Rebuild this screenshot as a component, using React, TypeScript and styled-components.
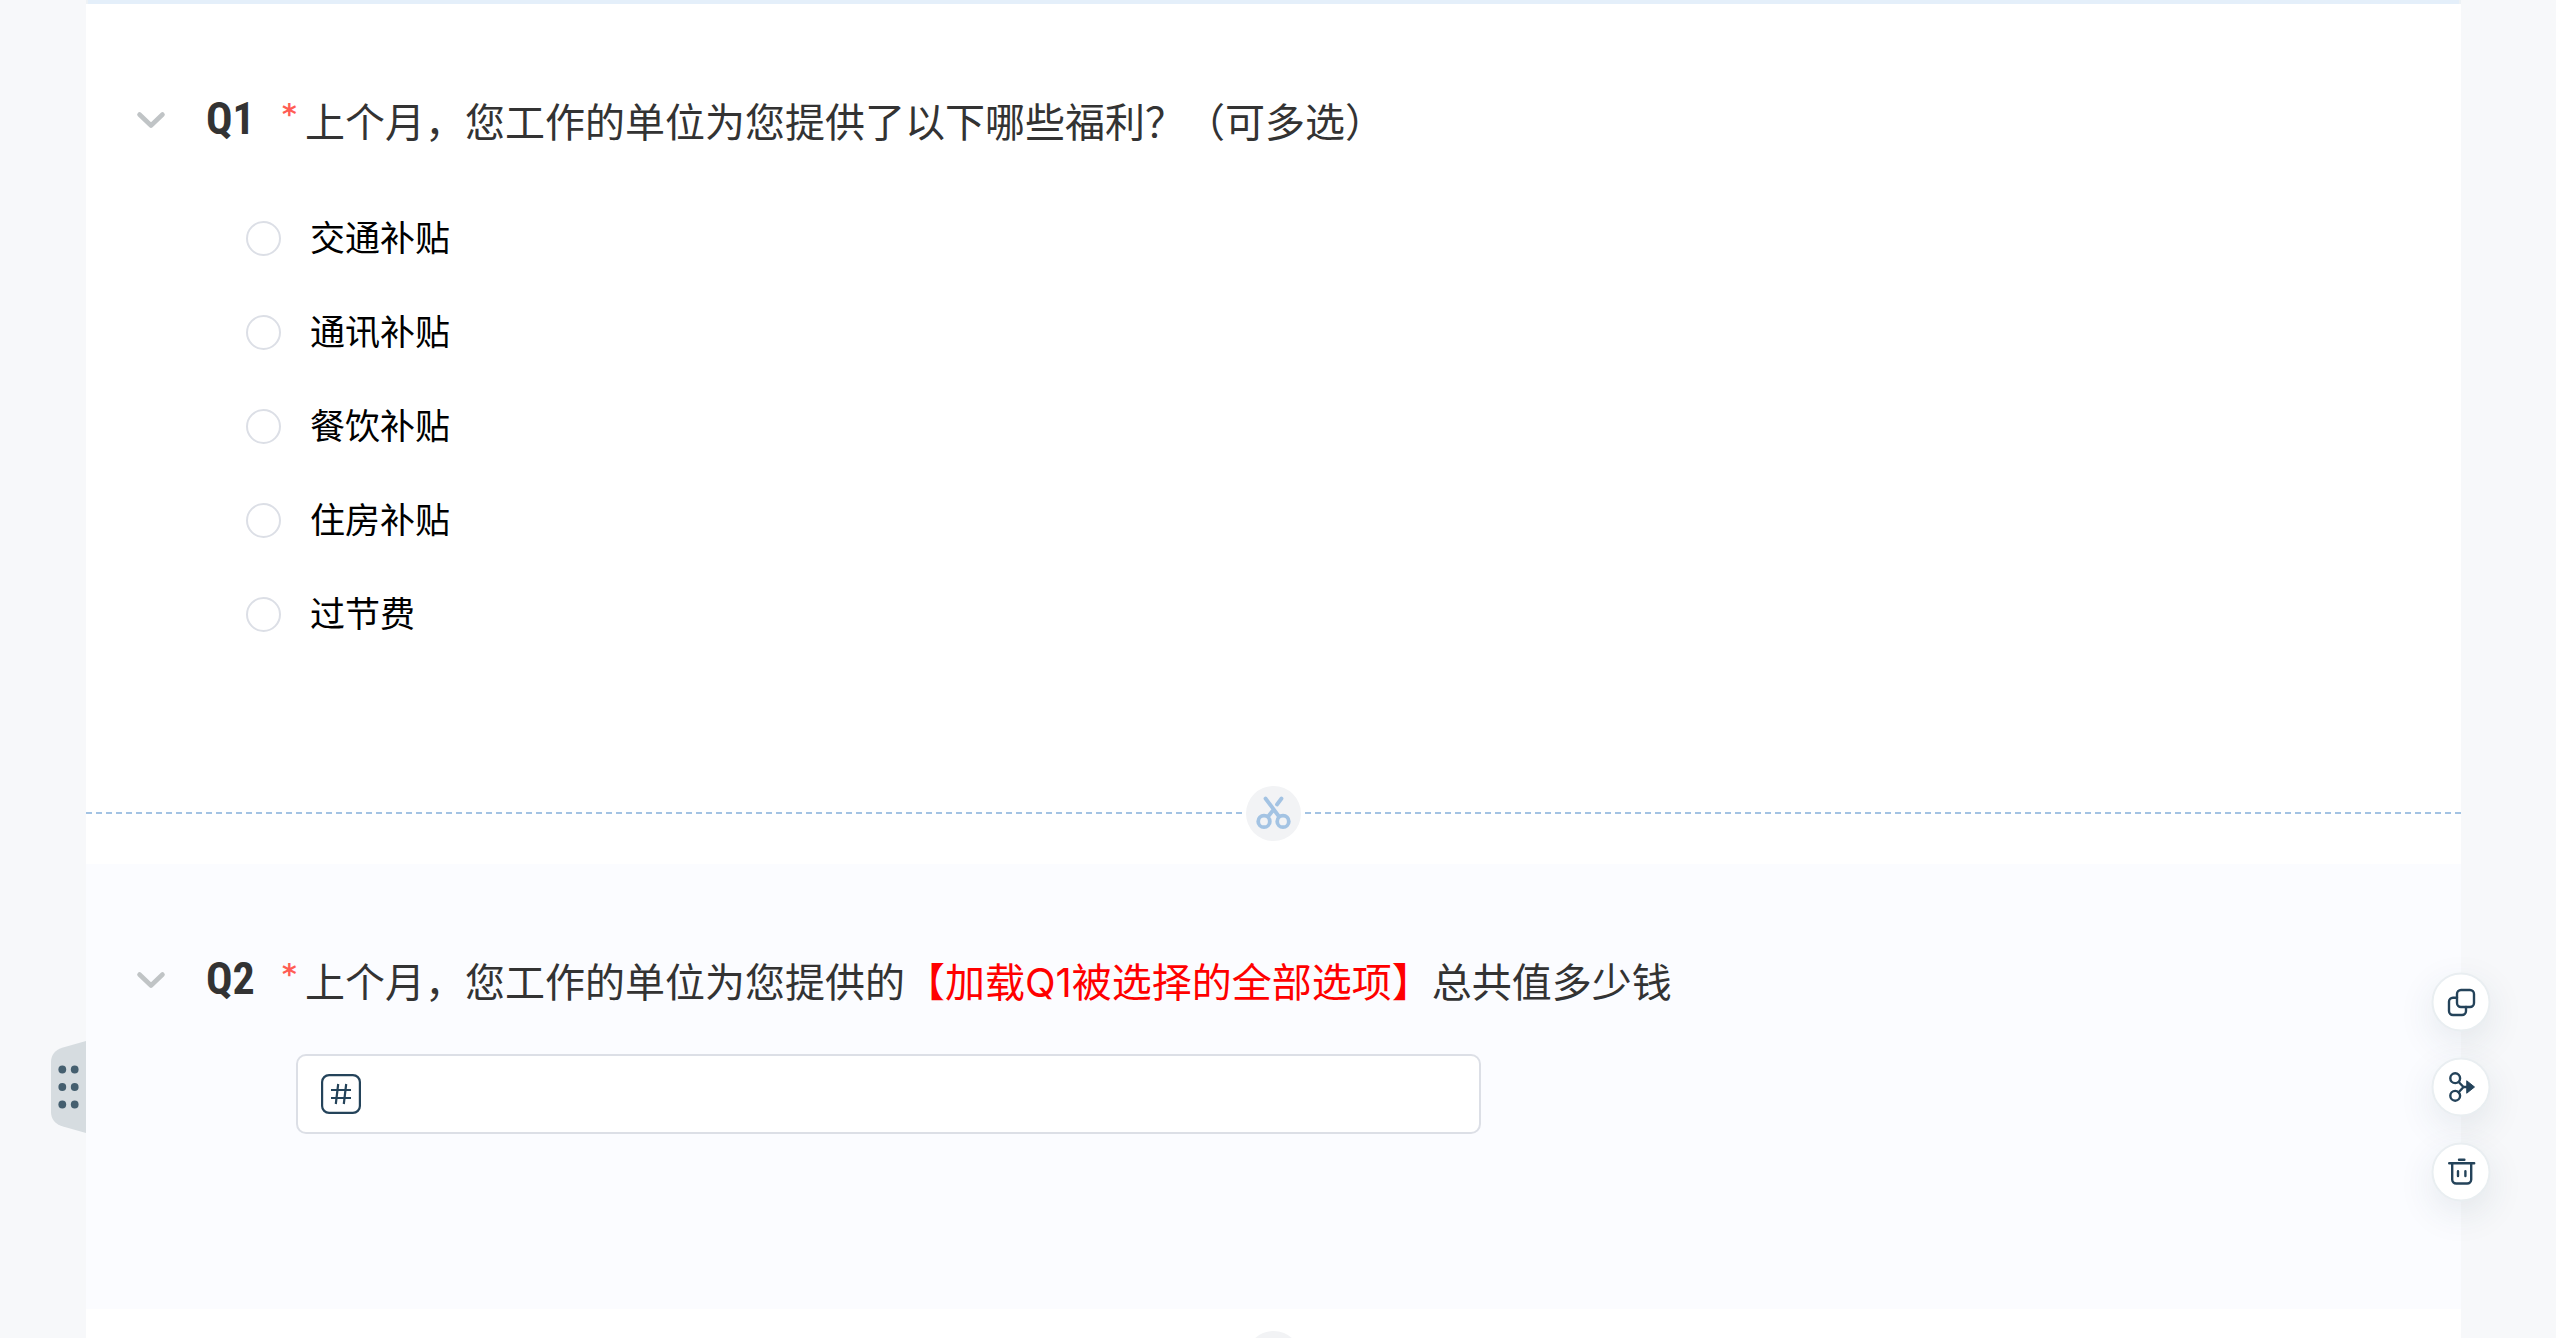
import React from "react";
import styled, { createGlobalStyle } from "styled-components";

const GlobalStyle = createGlobalStyle`
  *, *::before, *::after { box-sizing: border-box; }
  body {
    margin: 0;
    background: #f7f8fa;
    font-family: "Inter", "Noto Sans CJK SC", sans-serif;
  }
`;

const Page = styled.main`
  height: 100vh;
  overflow: hidden;
  padding: 0 95px 0 86px;
`;

const TopRule = styled.div`
  height: 4px;
  background: #e4effa;
  border: solid #eef2f5;
  border-width: 0 2px;
`;

const Block = styled.section<{ $active?: boolean; $bottom: number }>`
  position: relative;
  padding: 91px 50px ${(p) => p.$bottom}px;
  background: ${(p) => (p.$active ? "#fbfcff" : "#ffffff")};
`;

const Header = styled.header`
  display: flex;
  align-items: flex-start;
`;

const Collapse = styled.button`
  width: 30px;
  height: 50px;
  margin-right: 40px;
  padding: 0;
  border: 0;
  background: none;
  display: flex;
  align-items: center;
  cursor: pointer;
`;

const Number = styled.span`
  width: 76px;
  font: 700 44px/48px "Roboto Condensed", "Liberation Sans Narrow", "Roboto", sans-serif;
  color: #333333;
`;

const Star = styled.span`
  width: 23px;
  font: 700 28px/40px "DejaVu Sans", sans-serif;
  color: #ff5c54;
`;

const Title = styled.h2`
  margin: 0;
  font-size: 40px;
  line-height: 56px;
  font-weight: 400;
  color: #333333;
`;

const Mark = styled.span`
  color: #ff0000;
`;

const Options = styled.ul`
  list-style: none;
  margin: 40px 0 0;
  padding: 0 0 0 110px;
`;

const Option = styled.li`
  display: flex;
  align-items: center;
  height: 94px;
`;

const OptionLabel = styled.label`
  display: flex;
  align-items: center;
  gap: 29px;
  font-size: 35px;
  line-height: 50px;
  color: #000000;
  cursor: pointer;
`;

const Radio = styled.input`
  appearance: none;
  width: 35px;
  height: 35px;
  margin: 0;
  border: 2px solid #dcdfe6;
  border-radius: 50%;
  background: #ffffff;

  &:checked {
    border: 10px solid #a3c3e3;
  }
`;

const Divider = styled.div`
  display: flex;
  align-items: center;
  gap: 4px;
  height: 100px;
  padding-bottom: 2px;
  background: #ffffff;
`;

const Dashes = styled.span`
  flex: 1;
  height: 2px;
  background: repeating-linear-gradient(90deg, #a3c3e3 0 6px, transparent 6px 10px);
`;

const Cut = styled.button`
  width: 55px;
  height: 55px;
  padding: 0;
  border: 0;
  border-radius: 50%;
  background: #f2f3f5;
  display: block;
  cursor: pointer;
`;

const Field = styled.label`
  display: flex;
  align-items: center;
  gap: 20px;
  width: 1185px;
  max-width: 100%;
  height: 80px;
  margin: 43px 0 0 160px;
  padding: 0 23px;
  border: 2px solid #dcdfe6;
  border-radius: 10px;
  background: #ffffff;
`;

const FieldInput = styled.input`
  flex: 1;
  min-width: 0;
  border: 0;
  outline: 0;
  background: transparent;
  font: inherit;
  font-size: 35px;
`;

const Handle = styled.button`
  position: absolute;
  right: 100%;
  top: 50%;
  transform: translateY(-50%);
  width: 35px;
  height: 92px;
  padding: 0;
  border: 0;
  background: none;
  cursor: grab;

  svg { display: block; }
`;

const Tools = styled.div`
  position: absolute;
  right: 0;
  top: 50%;
  transform: translate(50%, -50%);
  display: flex;
  flex-direction: column;
  gap: 26px;
`;

const Tool = styled.button`
  width: 59px;
  height: 59px;
  padding: 0;
  border: 2px solid #e9eef1;
  border-radius: 50%;
  background: #ffffff;
  box-shadow: 0 12px 36px rgba(36, 67, 90, 0.1);
  display: grid;
  place-items: center;
  cursor: pointer;
`;

const Chevron = () => (
  <svg width="30" height="20" viewBox="0 0 30 20" fill="none" stroke="#c0c4c6" strokeWidth="4.6" strokeLinecap="round" strokeLinejoin="round" aria-hidden="true">
    <path d="M3.5 4.5 15 15.5 26.5 4.5" />
  </svg>
);

const Scissors = () => (
  <svg width="55" height="55" viewBox="0 0 55 55" fill="none" stroke="#a3c3e3" strokeWidth="3.8" strokeLinecap="round" aria-hidden="true">
    <circle cx="18" cy="35.4" r="5.8" />
    <circle cx="37" cy="35.4" r="5.8" />
    <path d="M19.5 12.5 33 30.5M35.500 12.5 31 18.5M26.5 25 22.5 30" />
  </svg>
);

const NumberIcon = () => (
  <svg width="40" height="40" viewBox="0 0 40 40" fill="none" stroke="#24435a" strokeWidth="2.2" aria-hidden="true">
    <rect x="1.1" y="1.1" width="37.8" height="37.8" rx="7" />
    <path d="M10 16H30M10 24H30M17.2 10 14.8 30M25.2 10 22.8 30" />
  </svg>
);

const HandleIcon = () => (
  <svg width="35" height="92" viewBox="0 0 35 92" aria-hidden="true">
    <path d="M35 0 12 6.5C4 9 0 14 0 21V71C0 78 4 83 12 85.5L35 92Z" fill="#d6dce0" />
    <g fill="#455f6f">
      {[28.5, 46, 63.5].map((y) => (
        <React.Fragment key={y}>
          <circle cx="11.3" cy={y} r="3.9" />
          <circle cx="23.7" cy={y} r="3.9" />
        </React.Fragment>
      ))}
    </g>
  </svg>
);

const ToolIcon = ({ children }: { children: React.ReactNode }) => (
  <svg width="36" height="36" viewBox="-18 -18 36 36" fill="none" stroke="#24435a" strokeWidth="2.4" strokeLinecap="round" strokeLinejoin="round" aria-hidden="true">
    {children}
  </svg>
);

const OPTIONS = ["交通补贴", "通讯补贴", "餐饮补贴", "住房补贴", "过节费"];

function QuestionHeader({ number, id, children }: { number: string; id: string; children: React.ReactNode }) {
  return (
    <Header>
      <Collapse type="button" aria-label="收起"><Chevron /></Collapse>
      <Number>{number}</Number>
      <Star>*</Star>
      <Title id={id}>{children}</Title>
    </Header>
  );
}

function PageBreak() {
  return (
    <Divider>
      <Dashes />
      <Cut type="button" aria-label="分页"><Scissors /></Cut>
      <Dashes />
    </Divider>
  );
}

export default function App() {
  return (
    <>
      <GlobalStyle />
      <Page>
        <TopRule />
        <Block $bottom={103} aria-labelledby="q1">
          <QuestionHeader number="Q1" id="q1">
            上个月，您工作的单位为您提供了以下哪些福利？（可多选）
          </QuestionHeader>
          <Options>
            {OPTIONS.map((text, i) => (
              <Option key={text}>
                <OptionLabel htmlFor={`q1-${i}`}>
                  <Radio type="radio" name="q1" id={`q1-${i}`} />
                  {text}
                </OptionLabel>
              </Option>
            ))}
          </Options>
        </Block>
        <PageBreak />
        <Block $active $bottom={175} aria-labelledby="q2">
          <Handle type="button" aria-label="拖动"><HandleIcon /></Handle>
          <QuestionHeader number="Q2" id="q2">
            上个月，您工作的单位为您提供的<Mark>【加载Q1被选择的全部选项】</Mark>总共值多少钱
          </QuestionHeader>
          <Field htmlFor="q2-value">
            <NumberIcon />
            <FieldInput id="q2-value" type="text" inputMode="numeric" aria-labelledby="q2" />
          </Field>
          <Tools>
            <Tool type="button" aria-label="复制">
              <ToolIcon>
                <rect x="-4.5" y="-11.5" width="17" height="17" rx="4" />
                <path d="M-4.5 -3.8H-8.5A4 4 0 0 0 -12.5 .2V9.5A4 4 0 0 0 -8.5 13.5H.5A4 4 0 0 0 4.5 9.5V5.5" />
              </ToolIcon>
            </Tool>
            <Tool type="button" aria-label="逻辑">
              <ToolIcon>
                <circle cx="-6.3" cy="-8.3" r="4.9" />
                <circle cx="-6.3" cy="9.3" r="4.9" />
                <path d="M-2.8 -4.5 2 .5 -2.8 5.7M2 .5H6" />
                <path d="M5.5 -5.5 13 .5 5.5 6.5Z" fill="#24435a" strokeWidth="1" />
              </ToolIcon>
            </Tool>
            <Tool type="button" aria-label="删除">
              <ToolIcon>
                <path d="M-2.5 -11.7H2.9M-12.3 -8.3H12.7M-9.3 -8V8A4 4 0 0 0 -5.3 12H5.7A4 4 0 0 0 9.7 8V-8M-3.5 -.3V4.5M3.9 -.3V4.5" />
              </ToolIcon>
            </Tool>
          </Tools>
        </Block>
        <PageBreak />
      </Page>
    </>
  );
}
